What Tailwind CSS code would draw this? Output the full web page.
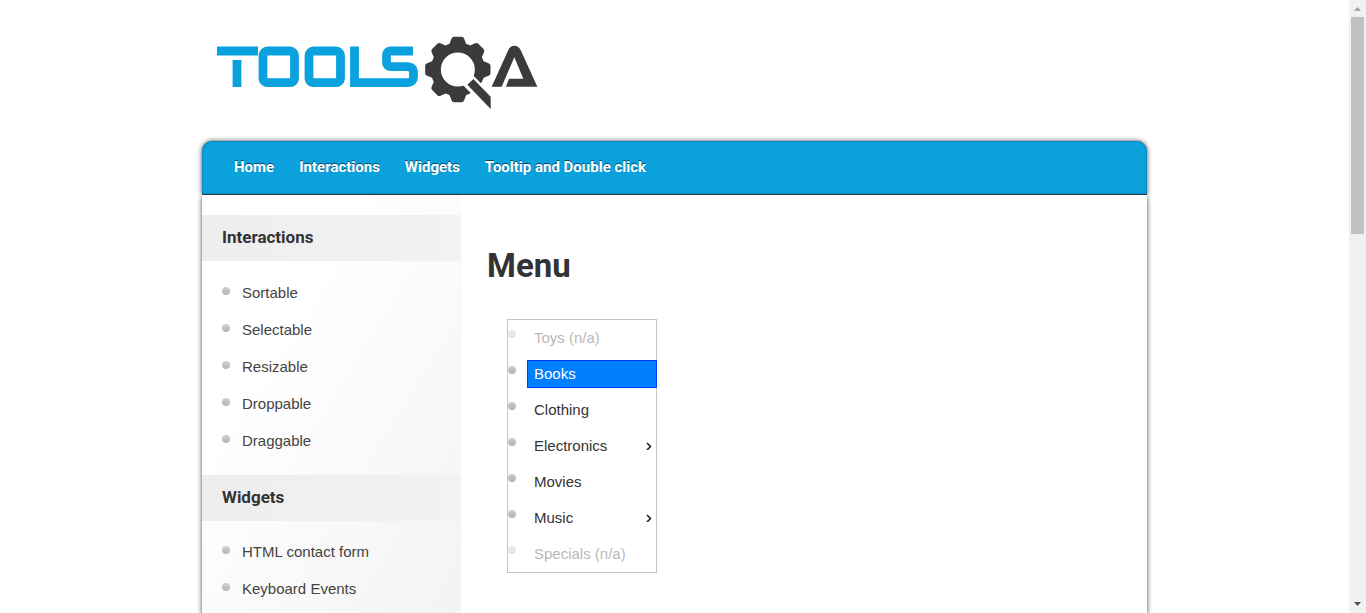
<!DOCTYPE html>
<html lang="en">
<head>
<meta charset="utf-8">
<title>Menu - ToolsQA</title>
<script src="https://cdn.jsdelivr.net/npm/@tailwindcss/browser@4"></script>
</head>
<body class="flex h-screen overflow-hidden bg-white font-['Liberation_Sans',Arial,sans-serif] text-[15px] text-[#333]">
<div class="h-full min-w-0 flex-1 overflow-hidden">
  <div class="mx-auto flex min-h-full w-full max-w-[945px] flex-col">
    <header class="px-3.5 pt-[34px] pb-[29px]">
      <a href="#" aria-label="ToolsQA home" class="block w-[325px]">
        <svg class="block h-[78px] w-full" viewBox="216 34 325 78" aria-hidden="true">
          <g fill="none" stroke="#0ba1de" stroke-width="8.8">
            <path d="M217 51H258M237 60V87"/>
            <rect x="263" y="51" width="31.5" height="31.7" rx="4.5"/>
            <rect x="309" y="51" width="31.5" height="31.7" rx="4.5"/>
            <path d="M413 51H391Q386.500 51 386.500 55.500V62Q386.500 66.700 391 66.700H407Q413.500 66.700 413.500 73V76Q413.500 82.700 407 82.700H354.500V46.500"/>
          </g>
          <g transform="translate(410 30) scale(.33333)" fill="#3b3b3d">
            <g transform="translate(143.500 118.500)">
              <circle r="66" fill="none" stroke="#3b3b3d" stroke-width="30"/>
              <path id="tooth" d="M-26-74L-19-92Q-17-98-11-98H11Q17-98 19-92L26-74Z"/>
              <use href="#tooth" transform="rotate(45)"/><use href="#tooth" transform="rotate(90)"/>
              <use href="#tooth" transform="rotate(180)"/><use href="#tooth" transform="rotate(225)"/>
              <use href="#tooth" transform="rotate(270)"/><use href="#tooth" transform="rotate(315)"/>
            </g>
            <path fill="#fff" d="M155 161L185 132L224 171L255 205V245L232 240Z"/>
            <path d="M172 164L190 147L242 200V237Z"/>
            <path d="M245 170L294 62Q300 47 313 47Q326 47 333 62L382 170H288L297 146H340L313 82L275 170Z"/>
          </g>
        </svg>
      </a>
    </header>

    <nav class="flex gap-[25px] rounded-t-[10px] border-b border-[#2b3a42] bg-[#0aa1dd] px-8 pt-4 pb-[17px] font-['Roboto',sans-serif] text-[15px] leading-5 font-bold text-white shadow-[0_0_5px_#444,inset_0_0_2px_#055a80] text-shadow-[0_-1px_0_#064a66]">
      <a href="#">Home</a>
      <a href="#">Interactions</a>
      <a href="#">Widgets</a>
      <a href="#">Tooltip and Double click</a>
    </nav>

    <div class="flex flex-1 bg-white shadow-[0_3px_5px_#444] [clip-path:inset(0_-10px)]">
      <aside class="w-[259px] shrink-0 bg-linear-to-br from-white from-30% to-[#f3f3f3] pt-5">
        <h2 class="bg-linear-to-r from-[#eee] to-[#f2f2f2] px-5 pt-[9px] pb-[11px] font-['Roboto',sans-serif] text-[17px] leading-[26px] font-bold">Interactions</h2>
        <ul class="px-5 pt-3.5 pb-[15px] text-[#444]">
          <li class="flex h-[37px] items-center gap-3"><span class="mb-1.5 size-2 rounded-full bg-linear-to-b from-[#d0d0d0] to-[#b5b5b5]"></span><a href="#">Sortable</a></li>
          <li class="flex h-[37px] items-center gap-3"><span class="mb-1.5 size-2 rounded-full bg-linear-to-b from-[#d0d0d0] to-[#b5b5b5]"></span><a href="#">Selectable</a></li>
          <li class="flex h-[37px] items-center gap-3"><span class="mb-1.5 size-2 rounded-full bg-linear-to-b from-[#d0d0d0] to-[#b5b5b5]"></span><a href="#">Resizable</a></li>
          <li class="flex h-[37px] items-center gap-3"><span class="mb-1.5 size-2 rounded-full bg-linear-to-b from-[#d0d0d0] to-[#b5b5b5]"></span><a href="#">Droppable</a></li>
          <li class="flex h-[37px] items-center gap-3"><span class="mb-1.5 size-2 rounded-full bg-linear-to-b from-[#d0d0d0] to-[#b5b5b5]"></span><a href="#">Draggable</a></li>
        </ul>
        <h2 class="bg-linear-to-r from-[#eee] to-[#f2f2f2] px-5 pt-[9px] pb-[11px] font-['Roboto',sans-serif] text-[17px] leading-[26px] font-bold">Widgets</h2>
        <ul class="px-5 pt-[13px] pb-1 text-[#444]">
          <li class="flex h-[37px] items-center gap-3"><span class="mb-1.5 size-2 rounded-full bg-linear-to-b from-[#d0d0d0] to-[#b5b5b5]"></span><a href="#">HTML contact form</a></li>
          <li class="flex h-[37px] items-center gap-3"><span class="mb-1.5 size-2 rounded-full bg-linear-to-b from-[#d0d0d0] to-[#b5b5b5]"></span><a href="#">Keyboard Events</a></li>
        </ul>
      </aside>

      <main class="min-w-0 flex-1 px-[26px] pt-[51px]">
        <h1 class="font-['Roboto',sans-serif] text-[33px] leading-10 font-bold">Menu</h1>
        <ul role="menu" class="mt-[33px] ml-5 w-[150px] border border-[#c5c5c5] leading-[26px]">
          <li class="flex h-9 items-center opacity-35"><span class="mb-2 size-2 rounded-full bg-linear-to-b from-[#d0d0d0] to-[#b0b0b0]"></span><button role="menuitem" disabled class="-mr-px ml-[11px] flex flex-1 items-center justify-between border border-transparent px-1.5">Toys (n/a)</button></li>
          <li class="flex h-9 items-center"><span class="mb-2 size-2 rounded-full bg-linear-to-b from-[#d0d0d0] to-[#b0b0b0]"></span><button role="menuitem" class="-mr-px ml-[11px] flex flex-1 items-center justify-between border border-[#003eff] bg-[#007fff] px-1.5 text-white">Books</button></li>
          <li class="flex h-9 items-center"><span class="mb-2 size-2 rounded-full bg-linear-to-b from-[#d0d0d0] to-[#b0b0b0]"></span><button role="menuitem" class="-mr-px ml-[11px] flex flex-1 items-center justify-between border border-transparent px-1.5">Clothing</button></li>
          <li class="flex h-9 items-center"><span class="mb-2 size-2 rounded-full bg-linear-to-b from-[#d0d0d0] to-[#b0b0b0]"></span><button role="menuitem" aria-haspopup="true" class="-mr-px ml-[11px] flex flex-1 items-center justify-between border border-transparent pr-1 pl-1.5">Electronics<svg class="h-2 w-1.5" viewBox="0 0 6 8" fill="none" stroke="#222" stroke-width="1.600"><path d="M1 1L4.500 4.500L1 8"/></svg></button></li>
          <li class="flex h-9 items-center"><span class="mb-2 size-2 rounded-full bg-linear-to-b from-[#d0d0d0] to-[#b0b0b0]"></span><button role="menuitem" class="-mr-px ml-[11px] flex flex-1 items-center justify-between border border-transparent px-1.5">Movies</button></li>
          <li class="flex h-9 items-center"><span class="mb-2 size-2 rounded-full bg-linear-to-b from-[#d0d0d0] to-[#b0b0b0]"></span><button role="menuitem" aria-haspopup="true" class="-mr-px ml-[11px] flex flex-1 items-center justify-between border border-transparent pr-1 pl-1.5">Music<svg class="h-2 w-1.5" viewBox="0 0 6 8" fill="none" stroke="#222" stroke-width="1.600"><path d="M1 1L4.500 4.500L1 8"/></svg></button></li>
          <li class="flex h-9 items-center opacity-35"><span class="mb-2 size-2 rounded-full bg-linear-to-b from-[#d0d0d0] to-[#b0b0b0]"></span><button role="menuitem" disabled class="-mr-px ml-[11px] flex flex-1 items-center justify-between border border-transparent px-1.5">Specials (n/a)</button></li>
        </ul>
      </main>
    </div>
  </div>
</div>

<!-- Page scroll bar -->
<div class="flex h-full w-[17px] shrink-0 flex-col items-center bg-[#f1f1f1]" aria-hidden="true">
  <svg class="h-[17px] w-[17px] shrink-0" viewBox="0 0 17 17"><path fill="#a3a3a3" d="M5 11L8.500 7L12 11Z"/></svg>
  <div class="h-[217px] w-[13px] bg-[#c1c1c1]"></div>
  <svg class="mt-auto h-[17px] w-[17px] shrink-0" viewBox="0 0 17 17"><path fill="#505050" d="M5 6L8.500 10L12 6Z"/></svg>
</div>
</body>
</html>
